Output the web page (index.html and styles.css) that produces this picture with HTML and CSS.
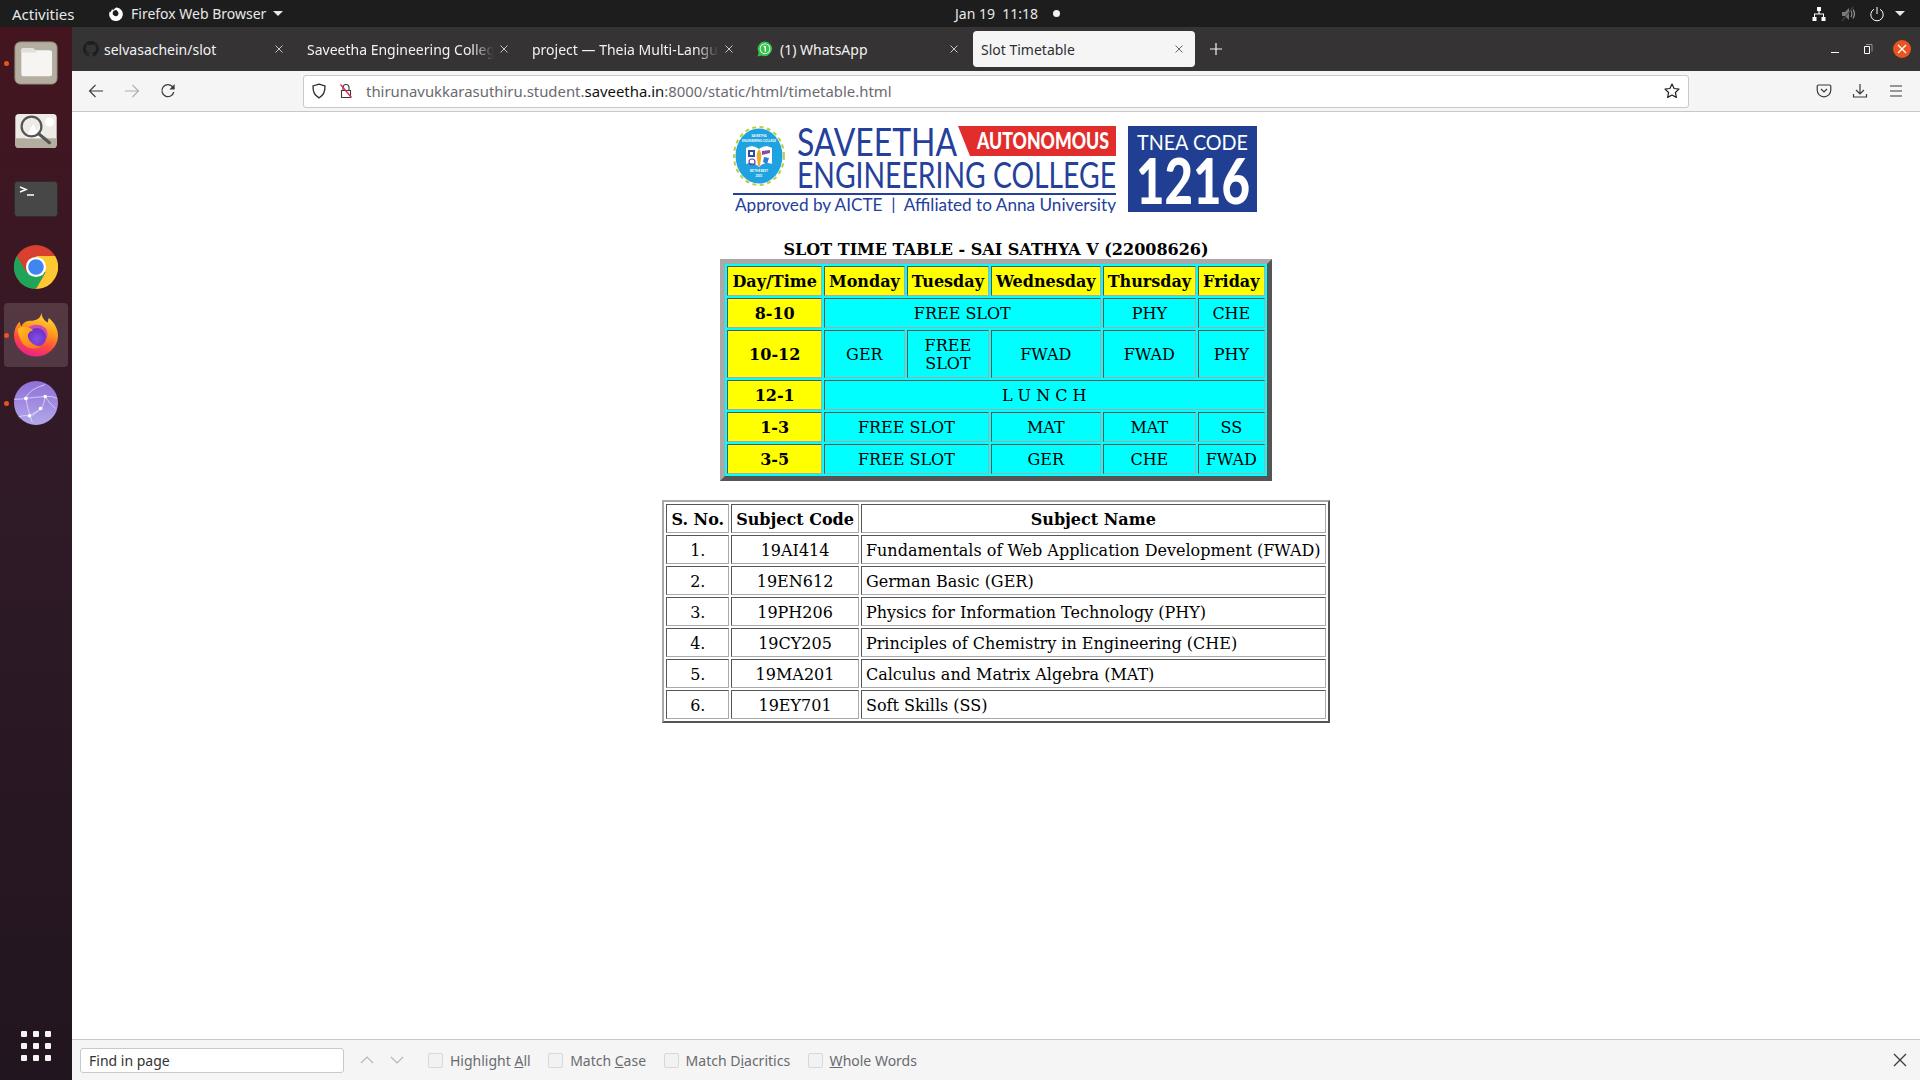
FILE: index.html
```html
<!DOCTYPE html>
<html lang="en">
<head>
<meta charset="utf-8">
<title>Slot Timetable</title>
<link rel="stylesheet" href="styles.css">
</head>
<body>
<header class="topbar">
  <div class="tb-left">
    <span class="activities">Activities</span>
    <span class="appmenu">
      <svg class="fx-mini" viewBox="0 0 16 16"><path fill="#fff" d="M8 1.500a6.800 6.800 0 1 1-6.200 4l1 .8c.2-1.300 1-2.700 1.700-3.300 0 .7.3 1.200.7 1.500C5.800 3 7 2 8.500 1.500c-.2.9 0 1.700.5 2.300a4.500 4.500 0 0 0-2.500.6 3 3 0 1 0 3.600 4.500c.6-1 .4-2.600-.6-3.600A4 4 0 0 1 8 1.500z"/></svg>
      Firefox Web Browser
      <span class="caret"></span>
    </span>
  </div>
  <div class="tb-clock">Jan 19&nbsp; 11:18 <span class="clock-dot"></span></div>
  <div class="tb-right">
    <svg class="tray" viewBox="0 0 16 16"><path fill="#fff" d="M6 1h4v4H8.600v2.400H13V11h1.500v4h-4v-4H12V8.500H4V11h1.500v4h-4v-4H3V7.400h4.400V5H6z"/></svg>
    <svg class="tray" viewBox="0 0 16 16"><path fill="#7a7a7a" d="M2 6h3l4-4v12l-4-4H2z"/><path fill="none" stroke="#9a9a9a" stroke-width="1.200" d="M11 5c1 1.500 1 4.500 0 6M13 3.500c1.600 2.500 1.600 6.500 0 9"/><path stroke="#4a4a4a" stroke-width="1.200" d="M2 15L13 1"/></svg>
    <svg class="tray" viewBox="0 0 16 16"><path fill="none" stroke="#fff" stroke-width="1" d="M5 3.200a6.200 6.200 0 1 0 6 0M8 1v7"/></svg>
    <span class="caret caret-big"></span>
  </div>
</header>

<div class="desktop">
  <nav class="dock">
    <div class="dock-item"><span class="run-dot"></span>
      <svg viewBox="0 0 48 48" class="dock-icon"><rect x="1" y="1" width="46" height="46" rx="6" fill="#b3ae9f" stroke="#8f8b7e"/><path fill="#f6f5f2" d="M8 10c0-1.500 1-2.500 2.500-2.500h9c1.500 0 2.500 1 3.500 2.500h16c1.500 0 2.500 1 2.500 2.500V36c0 1.500-1 2.500-2.500 2.500h-29C9 38.500 8 37.500 8 36z"/><path fill="#e2e0da" d="M8 10c0-1.500 1-2.500 2.500-2.500h9c1.500 0 2.500 1 3.500 2.500l2 2.500H8z"/></svg>
    </div>
    <div class="dock-item">
      <svg viewBox="0 0 48 40" class="dock-icon dock-icon-short"><rect x="1" y="1" width="46" height="38" rx="4" fill="#ecebe5"/><path fill="#b3ae9f" d="M1 28h46v7c0 2.500-2 4-4 4H5c-2 0-4-1.500-4-4z"/><circle cx="39" cy="10" r="5" fill="#fff"/><path fill="#fff" d="M12 28l9-16 4 8 3-5 6 13z"/><circle cx="19" cy="15" r="11" fill="none" stroke="#555" stroke-width="2.500"/><path stroke="#555" stroke-width="3.500" stroke-linecap="round" d="M27 23l12 10"/></svg>
    </div>
    <div class="dock-item">
      <svg viewBox="0 0 44 36" class="dock-icon dock-icon-term"><rect x="0.500" y="0.500" width="43" height="35" rx="3" fill="#474747" stroke="#2e2e2e"/><path fill="none" stroke="#fff" stroke-width="1.500" d="M6 6l6 2.500L6 11"/><path stroke="#fff" stroke-width="1.500" d="M13 14h7"/></svg>
    </div>
    <div class="dock-item">
      <svg viewBox="0 0 48 48" class="dock-icon"><circle cx="24" cy="24" r="24" fill="#d8402f"/><path fill="#1fa45a" d="M3.200 12A24 24 0 0 0 24 48L34.400 30 24 24 13.600 30z"/><path fill="#fcc933" d="M44.800 12A24 24 0 0 1 24 48L34.400 30 24 12z"/><circle cx="24" cy="24" r="11" fill="#fff"/><circle cx="24" cy="24" r="8.500" fill="#3f86f2"/></svg>
    </div>
    <div class="dock-item dock-active"><span class="run-dot"></span>
      <svg viewBox="0 0 48 48" class="dock-icon dock-icon-tall"><defs><linearGradient id="fxa" x1="0.750" y1="0" x2="0.400" y2="1"><stop offset="0" stop-color="#ffe03a"/><stop offset="0.400" stop-color="#ff9a1c"/><stop offset="0.700" stop-color="#ff4a3d"/><stop offset="1" stop-color="#e8218c"/></linearGradient><radialGradient id="fxb" cx="0.500" cy="0.600" r="0.600"><stop offset="0" stop-color="#8150e8"/><stop offset="1" stop-color="#6a30c0"/></radialGradient><linearGradient id="fxc" x1="0" y1="0" x2="1" y2="1"><stop offset="0" stop-color="#ffc21f"/><stop offset="1" stop-color="#ff6a1f"/></linearGradient></defs><path fill="url(#fxa)" d="M30 0C30 5 33 9 37 11 37 9 37.500 7 38 6 44 11 48 18 48 25A24 23 0 0 1 0 25C0 19 3 13 6 10 7 12 7 14 8 15 10 11 14 9 18 9 24 9 29 7 30 0z"/><path fill="#d24bb0" d="M14 18c5-6 15-6 20-1 3 3 3 8 2 11H14z"/><circle cx="25" cy="27" r="10" fill="url(#fxb)"/><path fill="url(#fxc)" d="M4 18C9 14 17 15 21 20 18 20 15 22 15 26 16 32 22 37 30 37 24 41 14 40 9 33 6 28 4 23 4 18z"/></svg>
    </div>
    <div class="dock-item"><span class="run-dot"></span>
      <svg viewBox="0 0 48 48" class="dock-icon"><defs><linearGradient id="web" x1="0.500" y1="0" x2="0.500" y2="1"><stop offset="0" stop-color="#8f6fd8"/><stop offset="1" stop-color="#b3a8ea"/></linearGradient></defs><circle cx="24" cy="24" r="24" fill="url(#web)"/><g stroke="#e7e1f7" stroke-width="0.800" fill="none"><path d="M0 20q7 0 13-1t21-2q8-1 13 2M13 19q3-10 21-15M13 19q2 14 7 26M34 17q-1 8-4 13L17 38q-6-1-12 1M34 17q5 8 11 13M30 30q-5 4-10 8"/></g><g fill="#fff"><circle cx="13" cy="19" r="2"/><circle cx="34" cy="17" r="2"/><circle cx="29" cy="30" r="2"/><circle cx="17" cy="38" r="2"/></g></svg>
    </div>
    <div class="dock-spacer"></div>
    <div class="dock-grid"><i></i><i></i><i></i><i></i><i></i><i></i><i></i><i></i><i></i></div>
  </nav>

  <main class="browser">
    <div class="tabbar">
      <div class="tab tab-first">
        <svg class="favicon" viewBox="0 0 16 16"><path fill="#1b1f23" d="M8 0a8 8 0 0 0-2.500 15.600c.4.100.5-.2.500-.4v-1.400c-2.200.5-2.700-1-2.700-1-.4-.9-.9-1.200-.9-1.200-.7-.5.100-.5.100-.5.800.100 1.200.8 1.200.8.700 1.200 1.900.9 2.300.7.100-.5.300-.9.500-1.100-1.800-.2-3.600-.9-3.600-4 0-.9.300-1.600.8-2.100-.1-.2-.4-1 .1-2.100 0 0 .7-.2 2.200.8a7.600 7.600 0 0 1 4 0c1.500-1 2.200-.8 2.200-.8.400 1.100.2 1.900.1 2.100.5.600.8 1.300.8 2.100 0 3.100-1.900 3.700-3.700 3.900.3.300.6.800.6 1.500v2.200c0 .2.100.5.600.4A8 8 0 0 0 8 0z"/></svg>
        <span class="tab-label">selvasachein/slot</span><svg class="tab-x" viewBox="0 0 8 8"><path d="M.5.500l7 7M7.500.500l-7 7"/></svg>
      </div>
      <div class="tab">
        <span class="tab-label tab-fade">Saveetha Engineering College</span><svg class="tab-x" viewBox="0 0 8 8"><path d="M.5.500l7 7M7.500.500l-7 7"/></svg>
      </div>
      <div class="tab">
        <span class="tab-label tab-fade">project — Theia Multi-Language</span><svg class="tab-x" viewBox="0 0 8 8"><path d="M.5.500l7 7M7.500.500l-7 7"/></svg>
      </div>
      <div class="tab tab-wa">
        <svg class="favicon" viewBox="0 0 16 16"><path fill="#33c24d" d="M8 .5a7.300 7.300 0 0 0-6.300 11L.6 15.400l4-1A7.300 7.300 0 1 0 8 .5z"/><circle cx="8" cy="7.800" r="5.300" fill="#fff"/><circle cx="8" cy="7.800" r="4.500" fill="#33c24d"/><path stroke="#fff" stroke-width="1.400" d="M8.300 5v5.500M6.800 6.300l1.500-1.300"/></svg>
        <span class="tab-label">(1) WhatsApp</span><svg class="tab-x" viewBox="0 0 8 8"><path d="M.5.500l7 7M7.500.500l-7 7"/></svg>
      </div>
      <div class="tab tab-selected">
        <span class="tab-label">Slot Timetable</span><svg class="tab-x" viewBox="0 0 8 8"><path d="M.5.500l7 7M7.500.500l-7 7"/></svg>
      </div>
      <span class="tab-new">
        <svg viewBox="0 0 12 12" class="plus"><path stroke="#f4f4f4" stroke-width="1.200" d="M6 0v12M0 6h12"/></svg>
      </span>
      <div class="win-controls">
        <span class="win-min"></span>
        <svg class="win-restore" viewBox="0 0 10 12"><path fill="none" stroke="#fff" stroke-width="1" d="M1.500 3.500h5v7h-5z"/><path fill="none" stroke="#aaa" stroke-width="0.800" d="M3 1.500h6v7"/></svg>
        <span class="win-close"><svg viewBox="0 0 10 10"><path stroke="#fff" stroke-width="1.300" d="M1 1l8 8M9 1l-8 8"/></svg></span>
      </div>
    </div>

    <div class="navbar">
      <svg class="nav-ico" viewBox="0 0 16 16"><path fill="none" stroke="#3a3a3f" stroke-width="1.100" d="M15 8H1.500M7.500 2L1.500 8l6 6"/></svg>
      <svg class="nav-ico" viewBox="0 0 16 16"><path fill="none" stroke="#aeaeb0" stroke-width="1.100" d="M1 8h13.500M8.500 2l6 6-6 6"/></svg>
      <svg class="nav-ico" viewBox="0 0 16 16"><path fill="none" stroke="#3a3a3f" stroke-width="1.200" d="M13.800 9a6 6 0 1 1-1.500-5.500L14 5.500"/><path fill="#3a3a3f" d="M14.600 1v5.400H9.400z"/></svg>
      <div class="urlbar">
        <svg class="url-ico" viewBox="0 0 16 16"><path fill="none" stroke="#2b2b30" stroke-width="1.300" d="M8 1.200l6 1.800c.2 5.500-1.500 9.500-6 11.800C3.500 12.500 1.800 8.500 2 3z"/></svg>
        <svg class="url-ico" viewBox="0 0 16 16"><path fill="none" stroke="#3a3a3f" stroke-width="1.100" d="M5 7V4.500a3 3 0 0 1 6 0V7M3.500 7.500h9v7h-9z"/><path stroke="#e22850" stroke-width="1.300" d="M2.500 1.500l11 13"/></svg>
        <span class="url-text">thirunavukkarasuthiru.student.<b>saveetha.in</b>:8000/static/html/timetable.html</span>
        <svg class="url-star" viewBox="0 0 16 16"><path fill="none" stroke="#1f1f24" stroke-width="1.200" stroke-linejoin="round" d="M8 1l2.100 4.500 4.900.6-3.600 3.400 1 4.900L8 12l-4.400 2.400 1-4.900L1 6.100l4.900-.6z"/></svg>
      </div>
      <div class="nav-right">
        <svg class="nav-ico" viewBox="0 0 16 16"><path fill="none" stroke="#3a3a3f" stroke-width="1.200" d="M2.500 2h11c.8 0 1.300.5 1.300 1.300V7c0 3.800-3 6.800-6.800 6.800S1.200 10.800 1.200 7V3.300C1.200 2.500 1.700 2 2.500 2zM5 6l3 3 3-3"/></svg>
        <svg class="nav-ico" viewBox="0 0 16 16"><path fill="none" stroke="#3a3a3f" stroke-width="1.200" d="M8 1v9.500M4 7l4 4 4-4M1.500 11v3h13v-3"/></svg>
        <svg class="nav-ico" viewBox="0 0 16 16"><path fill="none" stroke="#3a3a3f" stroke-width="1.200" d="M2 3h12M2 8h12M2 13h12"/></svg>
      </div>
    </div>

    <section class="page">
      <svg class="logo" viewBox="0 0 524 88" role="img" aria-label="Saveetha Engineering College logo">
        <g>
          <ellipse cx="26" cy="31" rx="25" ry="29" fill="none" stroke="#b7cf45" stroke-width="2" stroke-dasharray="4 3.500"/>
          <ellipse cx="26" cy="31" rx="23.500" ry="27.500" fill="#1fa3e0"/>
          <path fill="#fff" d="M13 23c5-3 9-2 13 1 4-3 8-4 13-1v16c-5-2-9-1-13 3-4-4-8-5-13-3z"/>
          <path fill="#2b4fa8" d="M15 25h7v7h-7z"/>
          <path fill="#fff" d="M17 27h3v3h-3z"/>
          <path fill="#8a4aa8" d="M29 26l8-1v3l-8 2z"/>
          <path fill="#f0a92b" d="M26 24c2 3 3 6 2 9l-1 8h-2l-1-8c-1-3 0-6 2-9z"/>
          <circle cx="19" cy="37" r="3" fill="none" stroke="#7a3aa0" stroke-width="1.200"/>
          <path fill="#2f7fd0" d="M31 32l5 1-2 6-4-2z"/>
          <text class="lg-seal" x="26" y="12" text-anchor="middle">SAVEETHA</text>
          <text class="lg-seal" x="26" y="17" text-anchor="middle">ENGINEERING COLLEGE</text>
          <text class="lg-seal" x="26" y="47" text-anchor="middle">BE THE BEST</text>
          <text class="lg-seal" x="26" y="52" text-anchor="middle">2001</text>
        </g>
        <text class="lg-big" x="64" y="31" textLength="160" lengthAdjust="spacingAndGlyphs">SAVEETHA</text>
        <path fill="#e12d2c" d="M225 1h158v30H237z"/>
        <text class="lg-auto" x="244" y="24" textLength="132" lengthAdjust="spacingAndGlyphs">AUTONOMOUS</text>
        <text class="lg-eng" x="64" y="63" textLength="319" lengthAdjust="spacingAndGlyphs">ENGINEERING COLLEGE</text>
        <path fill="#24409a" d="M0 68h383v2H0z"/>
        <text class="lg-sub" x="2" y="86" textLength="381" lengthAdjust="spacingAndGlyphs">Approved by AICTE &#160;| &#160;Affiliated to Anna University</text>
        <rect x="395" y="1" width="129" height="86" fill="#203f92"/>
        <text class="lg-tnea" x="404" y="25" textLength="111" lengthAdjust="spacingAndGlyphs">TNEA CODE</text>
        <text class="lg-num" x="403" y="79" textLength="114" lengthAdjust="spacingAndGlyphs">1216</text>
      </svg>
      <h1 class="tt-title">SLOT TIME TABLE - SAI SATHYA V (22008626)</h1>
      <table class="slot">
        <tr><th>Day/Time</th><th>Monday</th><th>Tuesday</th><th>Wednesday</th><th>Thursday</th><th>Friday</th></tr>
        <tr><th>8-10</th><td colspan="3">FREE SLOT</td><td>PHY</td><td>CHE</td></tr>
        <tr><th>10-12</th><td>GER</td><td>FREE<br>SLOT</td><td>FWAD</td><td>FWAD</td><td>PHY</td></tr>
        <tr><th>12-1</th><td colspan="5">L U N C H</td></tr>
        <tr><th>1-3</th><td colspan="2">FREE SLOT</td><td>MAT</td><td>MAT</td><td>SS</td></tr>
        <tr><th>3-5</th><td colspan="2">FREE SLOT</td><td>GER</td><td>CHE</td><td>FWAD</td></tr>
      </table>
      <table class="subjects">
        <tr><th>S. No.</th><th>Subject Code</th><th>Subject Name</th></tr>
        <tr><td>1.</td><td>19AI414</td><td class="name">Fundamentals of Web Application Development (FWAD)</td></tr>
        <tr><td>2.</td><td>19EN612</td><td class="name">German Basic (GER)</td></tr>
        <tr><td>3.</td><td>19PH206</td><td class="name">Physics for Information Technology (PHY)</td></tr>
        <tr><td>4.</td><td>19CY205</td><td class="name">Principles of Chemistry in Engineering (CHE)</td></tr>
        <tr><td>5.</td><td>19MA201</td><td class="name">Calculus and Matrix Algebra (MAT)</td></tr>
        <tr><td>6.</td><td>19EY701</td><td class="name">Soft Skills (SS)</td></tr>
      </table>
    </section>

    <footer class="findbar">
      <div class="find-input">Find in page</div>
      <svg class="find-arrow" viewBox="0 0 14 8"><path fill="none" stroke="#b5b5b7" stroke-width="1.100" d="M1 7l6-6 6 6"/></svg>
      <svg class="find-arrow" viewBox="0 0 14 8"><path fill="none" stroke="#b5b5b7" stroke-width="1.100" d="M1 1l6 6 6-6"/></svg>
      <label class="find-check"><span class="box"></span><span>Highlight <u>A</u>ll</span></label>
      <label class="find-check"><span class="box"></span><span>Match <u>C</u>ase</span></label>
      <label class="find-check"><span class="box"></span><span>Match D<u>i</u>acritics</span></label>
      <label class="find-check"><span class="box"></span><span><u>W</u>hole Words</span></label>
      <svg class="find-close" viewBox="0 0 14 14"><path stroke="#3a3a3f" stroke-width="1.300" d="M1 1l12 12M13 1L1 13"/></svg>
    </footer>
  </main>
</div>
</body>
</html>
```
FILE: styles.css
```css
* { box-sizing: border-box; }
html, body { margin: 0; height: 100%; }
body {
  width: 1920px; height: 1080px; overflow: hidden;
  display: flex; flex-direction: column;
  font-family: "Noto Sans", "Open Sans", sans-serif;
  background: #fff;
}
.topbar {
  height: 27px; flex: none; background: #1d1d1d; color: #e8e8e8;
  font-size: 14px; display: grid; grid-template-columns: 955px auto 1fr; align-items: center;
}
.tb-left { display: flex; align-items: center; padding-left: 12px; }
.activities { width: 96px; font-size: 15px; }
.appmenu { display: flex; align-items: center; gap: 6px; }
.fx-mini { width: 16px; height: 16px; margin-right: 1px; }
.caret { width: 0; height: 0; border: 5px solid transparent; border-top-color: #e8e8e8; border-bottom: 0; margin-left: 1px; }
.tb-clock { display: flex; align-items: center; gap: 5px; font-size: 14px; }
.clock-dot { width: 7px; height: 7px; border-radius: 50%; background: #f2f2f2; margin-left: 10px; }
.tb-right { display: flex; justify-content: flex-end; align-items: center; gap: 13px; padding-right: 15px; }
.tray { width: 16px; height: 16px; }
.caret-big { margin-left: -3px; }

.desktop { flex: 1; display: flex; min-height: 0; }
.dock {
  width: 72px; flex: none; display: flex; flex-direction: column; align-items: center;
  background: linear-gradient(180deg, #44151f 0%, #2f1a28 45%, #21151f 100%);
  padding-top: 4px;
}
.dock-item {
  position: relative; width: 64px; height: 64px; margin-bottom: 4px;
  display: flex; align-items: center; justify-content: center; border-radius: 4px;
}
.dock-icon { width: 44px; height: 44px; display: block; }
.dock-icon-short { height: 36px; width: 44px; }
.dock-icon-term { width: 44px; height: 36px; }
.dock-icon-tall { width: 44px; height: 45px; margin-top: -2px; }
.dock-active { background: rgba(255,255,255,.14); }
.run-dot { position: absolute; left: 0; top: 30px; width: 5px; height: 5px; border-radius: 50%; background: #e95420; }
.dock-spacer { flex: 1; }
.dock-grid { display: grid; grid-template-columns: repeat(3, 6px); gap: 6px; margin-bottom: 19px; }
.dock-grid i { width: 6px; height: 6px; border-radius: 1px; background: #f4f4f4; }

.browser { flex: 1; min-width: 0; display: flex; flex-direction: column; background: #fff; }
.tabbar {
  height: 44px; flex: none; background: #353334; display: flex; align-items: center; padding-left: 1px; color: #f2f2f2;
  font-size: 14px;
}
.tab { width: 225px; height: 36px; display: flex; align-items: center; padding: 0 11px 0 9px; flex: none; border-radius: 4px; }
.tab-first { padding-left: 10px; }
.favicon { width: 16px; height: 16px; flex: none; margin-right: 5px; }
.tab-wa .favicon { margin-right: 7px; }
.tab-label { flex: 1; white-space: nowrap; overflow: hidden; min-width: 0; }
.tab-fade { -webkit-mask-image: linear-gradient(90deg, #000 88%, transparent); mask-image: linear-gradient(90deg, #000 88%, transparent); }
.tab-x { width: 8px; height: 8px; flex: none; margin: 0 4px 0 6px; fill: none; stroke: #d8d8d8; stroke-width: .9; }
.tab-selected { background: #f5f5f5; color: #2f2f33; width: 222px; padding: 0 8px; }
.tab-selected .tab-x { stroke: #555; }
.tab-new { width: 42px; display: flex; justify-content: center; }
.plus { width: 12px; height: 12px; }
.win-controls { margin-left: auto; display: flex; align-items: center; padding-right: 9px; }
.win-min { width: 8px; height: 1px; background: #fff; margin-top: 6px; }
.win-restore { width: 10px; height: 12px; margin-left: 24px; }
.win-close { width: 18px; height: 18px; border-radius: 50%; background: #e95420; margin-left: 20px; display: flex; align-items: center; justify-content: center; }
.win-close svg { width: 10px; height: 10px; }

.navbar {
  height: 41px; flex: none; background: #f5f5f5; border-bottom: 1px solid #c8c8c8;
  display: flex; align-items: center; padding: 0 16px 0 6px;
}
.nav-ico { width: 16px; height: 16px; flex: none; margin: 0 10px; }
.urlbar {
  width: 1386px; height: 33px; margin-left: 117px; background: #fff; border: 1px solid #c9c9c9; border-radius: 3px;
  display: flex; align-items: center; padding: 0 8px 0 7px; font-size: 14.900px; color: #6a6a70;
}
.url-ico { width: 16px; height: 16px; flex: none; margin-right: 11px; }
.url-text { flex: 1; padding-left: 1px; white-space: nowrap; }
.url-text b { font-weight: 400; color: #111; }
.url-star { width: 16px; height: 16px; flex: none; }
.nav-right { display: flex; margin-left: auto; }
.nav-right .nav-ico { margin: 0 0 0 20px; }

.page {
  flex: 1; min-height: 0; display: flex; flex-direction: column; align-items: center;
  font-family: "DejaVu Serif", serif; font-size: 16px; color: #000; background: #fff; padding-top: 13px;
}
.logo { width: 524px; height: 88px; flex: none; margin-right: 2px; }
.tt-title { margin: 27px 0 0; font-size: 16px; font-weight: 700; line-height: 19px; }
table { border-collapse: separate; flex: none; }
.slot {
  border: 5px solid; border-color: #a9a9a9 #555 #555 #a9a9a9;
  background: #0ff; border-spacing: 2px;
}
.slot th, .slot td { border: 1px solid; border-color: #555 #a9a9a9 #a9a9a9 #555; text-align: center; padding: 6px 4px 4px; line-height: 18px; }
.slot th { background: #ff0; }
.slot td { background: #0ff; }
.subjects { margin-top: 19px; border: 2px solid; border-color: #a9a9a9 #555 #555 #a9a9a9; border-spacing: 2px; }
.subjects th, .subjects td { border: 1px solid; border-color: #555 #a9a9a9 #a9a9a9 #555; padding: 6px 4px 3px; text-align: center; line-height: 18px; }
.subjects td.name { text-align: left; }

.findbar {
  height: 41px; flex: none; background: #f5f5f5; border-top: 1px solid #c8c8c8;
  display: flex; align-items: center; padding: 0 13px 0 8px; font-size: 14px; color: #6a6a70;
}
.find-input { width: 264px; height: 25px; background: #fff; border: 1px solid #c9c9c9; border-radius: 3px; padding-left: 8px; line-height: 23px; color: #333; margin-right: 16px; }
.find-arrow { width: 14px; height: 8px; margin-right: 16px; }
.find-check { display: flex; align-items: center; gap: 7px; margin-right: 17.500px; }
.find-check:first-of-type { margin-left: 8px; }
.box { width: 15px; height: 15px; border: 1px solid #d8d8d8; border-radius: 2px; background: #f2f2f2; }
.find-close { width: 14px; height: 14px; margin-left: auto; }

.lg-big { font-family: "Lato", sans-serif; font-size: 39px; fill: #24409a; }
.lg-eng { font-family: "Lato", sans-serif; font-size: 36px; fill: #24409a; }
.lg-auto { font-family: "Lato", sans-serif; font-size: 22px; font-weight: 900; fill: #fff; }
.lg-sub { font-family: "Lato", sans-serif; font-size: 18px; fill: #24409a; }
.lg-tnea { font-family: "Lato", sans-serif; font-size: 22px; fill: #fff; }
.lg-num { font-family: "Lato", sans-serif; font-size: 62px; font-weight: 900; fill: #fff; }
.lg-seal { font-family: "Lato", sans-serif; font-size: 3px; font-weight: 700; fill: #fff; }
```
